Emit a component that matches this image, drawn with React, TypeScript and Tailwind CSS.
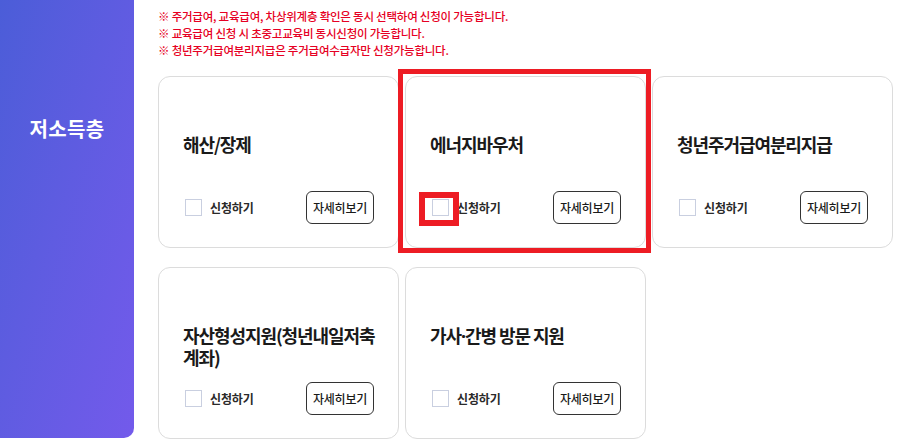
import React from "react";

const font = { fontFamily: '"Noto Sans CJK KR", "Noto Sans", sans-serif' };

type Item = { title: React.ReactNode; key: string; highlight?: boolean };

const items: Item[] = [
  { key: "a", title: "해산/장제" },
  { key: "b", title: "에너지바우처", highlight: true },
  { key: "c", title: "청년주거급여분리지급" },
  { key: "d", title: "자산형성지원(청년내일저축계좌)" },
  {
    key: "e",
    title: (
      <>
        가사<span style={{ fontFamily: '"Noto Sans", sans-serif' }}>·</span>간병 방문 지원
      </>
    ),
  },
];

function Card({ item }: { item: Item }) {
  return (
    <div className="relative">
      <div className="flex h-[172px] flex-col rounded-[12px] border border-[#dcdcdc] bg-white pb-[23px] pl-6 pr-[22px] pt-[56px]">
        <h3 className="-mr-[12px] text-[18px] font-bold leading-[22px] tracking-[-0.06em] text-[#1a1a1a]">
          {item.title}
        </h3>
        <div className="mt-auto flex items-center justify-between pr-[2px]">
          <label className="relative flex items-center gap-2">
            <span className="relative ml-[2px] block h-[17px] w-[17px] border border-[#c9cfe0] bg-white">
              {item.highlight && (
                <span className="absolute -bottom-[11px] -left-[14px] -right-[11px] -top-[8px] border-[6px] border-[#ed1c24]" />
              )}
            </span>
            <span className="text-[12px] font-semibold tracking-[-0.01em] text-[#2a2a2a]">
              신청하기
            </span>
          </label>
          <button className="flex h-[33px] w-[68px] items-center justify-center rounded-[6px] border border-[#333] bg-white text-[12px] font-medium tracking-[-0.02em] text-[#1a1a1a]">
            자세히보기
          </button>
        </div>
      </div>
      {item.highlight && (
        <div className="pointer-events-none absolute -bottom-[5px] -left-[7px] -right-[5px] -top-[7px] border-[5px] border-[#ed1c24]" />
      )}
    </div>
  );
}

export default function App() {
  return (
    <div className="flex min-h-[446px] w-[899px] items-start bg-white" style={font}>
      <aside className="flex h-[438px] w-[134px] shrink-0 justify-center rounded-br-[10px] bg-linear-to-br from-[#4b5dd8] to-[#735aeb] pt-[115px]">
        <span className="text-[20px] font-bold leading-[28px] tracking-[0.02em] text-white">
          저소득층
        </span>
      </aside>
      <main className="ml-6 w-[735px] pt-2">
        <div className="text-[11.5px] font-medium leading-[17px] tracking-[-0.02em] text-[#e60023]">
          <p>※ 주거급여, 교육급여, 차상위계층 확인은 동시 선택하여 신청이 가능합니다.</p>
          <p>※ 교육급여 신청 시 초중고교육비 동시신청이 가능합니다.</p>
          <p>※ 청년주거급여분리지급은 주거급여수급자만 신청가능합니다.</p>
        </div>
        <div className="mt-[17px] grid grid-cols-3 gap-x-[6px] gap-y-[19px]">
          {items.map((it) => (
            <Card key={it.key} item={it} />
          ))}
        </div>
      </main>
    </div>
  );
}
